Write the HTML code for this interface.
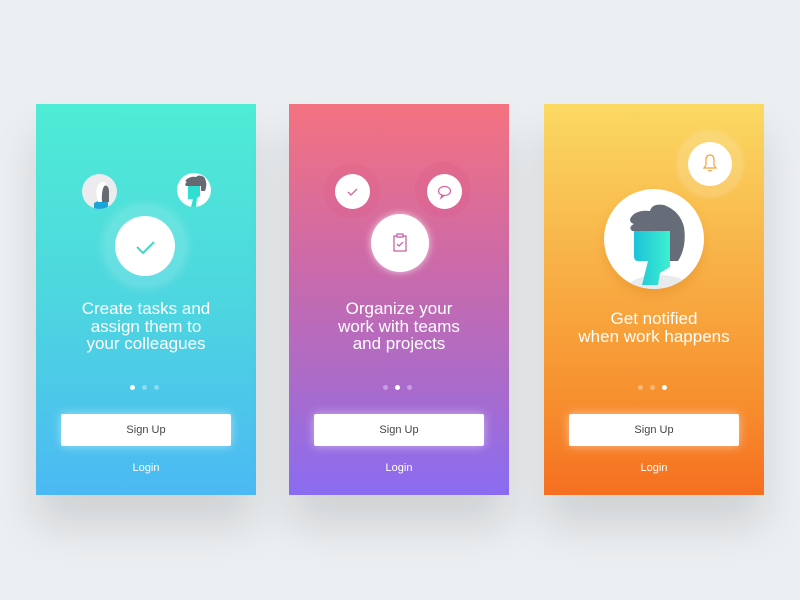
<!DOCTYPE html>
<html><head><style>
body{margin:0;width:800px;height:600px;background:#eceff1;position:relative;overflow:hidden;font-family:"Liberation Sans",sans-serif}
.card{position:absolute;top:104px;width:220px;height:391px;overflow:hidden;box-shadow:0 30px 40px rgba(0,0,0,.12)}
.c{position:absolute;border-radius:50%;background:#fff;overflow:hidden}
.t{position:absolute;left:0;width:220px;text-align:center;color:#fff;font-size:17px;line-height:17.5px}
.dots{position:absolute;top:281px;left:94px;width:32px;height:6px}
.dots i{position:absolute;top:0;width:5px;height:5px;border-radius:50%;background:rgba(255,255,255,.35)}
.btn{position:absolute;left:25px;top:310px;width:170px;height:32px;background:#fff;border-radius:2px;box-shadow:0 0 10px rgba(255,255,255,.5);text-align:center;line-height:32px;font-size:11px;color:#444}
.lg{position:absolute;top:358px;left:0;width:220px;text-align:center;color:#fff;font-size:11px}
.ring{position:absolute;border-radius:50%}
</style></head><body>

<div class="card" style="left:36px;background:linear-gradient(180deg,#4eecd5 0%,#4dd6df 50%,#4bb9f4 100%)">
  <div class="ring" style="left:69px;top:102px;width:80px;height:80px;background:rgba(255,255,255,.15);box-shadow:0 0 12px rgba(255,255,255,.3)"></div>
  <div class="c" style="left:79px;top:112px;width:60px;height:60px">
    <svg width="60" height="60"><path d="M22 31 l6 6 l11 -11" stroke="#3fd8c8" stroke-width="2" fill="none"/></svg>
  </div>
  <div class="c" style="left:46px;top:70px;width:35px;height:35px;background:#ececef">
    <svg width="35" height="35"><path d="M12 35 v-6 l8 -4 h6 v10z" fill="#1aa5d8"/><path d="M17 28 q-1 -12 4 -16 q6 -2 6 6 v10 z" fill="#656a73"/><path d="M16 28 q-4 -14 2 -19 q4 -3 6 1 q-5 4 -4 18z" fill="#fff"/></svg>
  </div>
  <div class="c" style="left:141px;top:69px;width:34px;height:34px">
    <svg width="34" height="34"><path d="M11 13 h12 v10 l-3 2 l-1 9 h-5 l2 -8 h-5z" fill="#2fdfd0"/><path d="M9 13 q-2 -2 1 -4 q-3 -1 0 -3 q4 -3 9 -2 q3 -3 8 0 q4 6 1 14 h-4 v-5z" fill="#656a73"/></svg>
  </div>
  <div class="t" style="top:196px">Create tasks and<br>assign them to<br>your colleagues</div>
  <div class="dots"><i style="left:0;background:#fff"></i><i style="left:12px"></i><i style="left:24px"></i></div>
  <div class="btn">Sign Up</div><div class="lg">Login</div>
</div>

<div class="card" style="left:289px;background:linear-gradient(180deg,#f4727f 0%,#cd6aa8 40%,#ac6bc8 70%,#8a6cf2 100%)">
  <div class="ring" style="left:35px;top:59px;width:56px;height:56px;background:rgba(220,80,130,.15)"></div>
  <div class="c" style="left:46px;top:70px;width:35px;height:35px">
    <svg width="35" height="35"><path d="M13 18 l3 3 l6 -6" stroke="#d95f9e" stroke-width="1.3" fill="none"/></svg>
  </div>
  <div class="ring" style="left:126px;top:58px;width:56px;height:56px;background:rgba(220,80,130,.2)"></div>
  <div class="c" style="left:138px;top:70px;width:35px;height:35px">
    <svg width="35" height="35"><ellipse cx="17.5" cy="17" rx="6" ry="4.5" stroke="#d95f9e" stroke-width="1.2" fill="none"/><path d="M15 21 l-1 3 l3 -2.5" stroke="#d95f9e" stroke-width="1.2" fill="none"/></svg>
  </div>
  <div class="c" style="left:82px;top:110px;width:58px;height:58px;box-shadow:0 0 8px rgba(255,255,255,.7)">
    <svg width="58" height="58"><rect x="23" y="22" width="12" height="15" stroke="#c05aa0" stroke-width="1.2" fill="none"/><rect x="26" y="20" width="6" height="3" stroke="#c05aa0" stroke-width="1.2" fill="#fff"/><path d="M26 30 l2 2 l4 -4" stroke="#c05aa0" stroke-width="1.2" fill="none"/></svg>
  </div>
  <div class="t" style="top:196px">Organize your<br>work with teams<br>and projects</div>
  <div class="dots"><i style="left:0"></i><i style="left:12px;background:#fff"></i><i style="left:24px"></i></div>
  <div class="btn">Sign Up</div><div class="lg">Login</div>
</div>

<div class="card" style="left:544px;background:linear-gradient(180deg,#fbd963 0%,#f8b247 40%,#f7902f 75%,#f56f20 100%)">
  <div class="ring" style="left:134px;top:28px;width:64px;height:64px;background:rgba(255,255,255,.15);box-shadow:0 0 6px rgba(255,255,255,.3)"></div>
  <div class="c" style="left:144px;top:38px;width:44px;height:44px">
    <svg width="44" height="44"><path d="M16 26 h12 l-2 -3 v-5 q0 -5 -4 -5 q-4 0 -4 5 v5z" stroke="#f4a43a" stroke-width="1.2" fill="none"/><path d="M20 28 q2 2 4 0" stroke="#f4a43a" stroke-width="1.2" fill="none"/></svg>
  </div>
  <div class="c" style="left:60px;top:85px;width:100px;height:100px;box-shadow:0 6px 10px rgba(200,100,0,.2)">
    <svg width="100" height="100"><defs><linearGradient id="g" x1="0" x2="1"><stop offset="0" stop-color="#1cc2d8"/><stop offset="1" stop-color="#3ef0cf"/></linearGradient></defs>
    <ellipse cx="55" cy="100" rx="32" ry="14" fill="#e8eaed"/>
    <path d="M30 42 h36 v36 l-10 6 l-2 12 h-16 l6 -24 h-10 q-4 0 -4 -5z" fill="url(#g)"/>
    <path d="M28 42 q-4 -4 2 -7 q-8 -3 0 -10 q6 -4 16 -3 q2 -8 14 -6 q16 6 20 22 q3 20 -6 34 l-8 0 v-30 h-38z" fill="#676d78"/></svg>
  </div>
  <div class="t" style="top:206px">Get notified<br>when work happens</div>
  <div class="dots"><i style="left:0"></i><i style="left:12px"></i><i style="left:24px;background:#fff"></i></div>
  <div class="btn">Sign Up</div><div class="lg">Login</div>
</div>
</body></html>
